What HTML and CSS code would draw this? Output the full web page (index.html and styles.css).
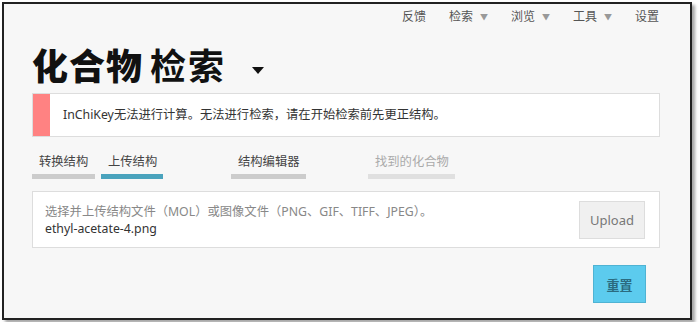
FILE: index.html
```html
<!DOCTYPE html>
<html lang="zh">
<head>
  <meta charset="UTF-8">
  <title>化合物检索</title>
  <link rel="stylesheet" href="styles.css">
</head>
<body>
  <div class="frame">
    <nav class="topnav">
      <a>反馈</a>
      <a>检索<span class="caret">▼</span></a>
      <a>浏览<span class="caret">▼</span></a>
      <a>工具<span class="caret">▼</span></a>
      <a>设置</a>
    </nav>

    <h1 class="title"><b>化合物</b><span class="light">检索</span><span class="title-caret"></span></h1>

    <div class="alert">
      <div class="alert-bar"></div>
      <div class="alert-text">InChiKey无法进行计算。无法进行检索，请在开始检索前先更正结构。</div>
    </div>

    <div class="tabs">
      <div class="tab t1">转换结构</div>
      <div class="tab t2 active">上传结构</div>
      <div class="tab t3">结构编辑器</div>
      <div class="tab t4 disabled">找到的化合物</div>
    </div>

    <div class="upload">
      <div class="upload-info">
        <div class="hint">选择并上传结构文件（MOL）或图像文件（PNG、GIF、TIFF、JPEG）。</div>
        <div class="filename">ethyl-acetate-4.png</div>
      </div>
      <button class="btn-upload">Upload</button>
    </div>

    <div class="actions">
      <button class="btn-reset">重置</button>
    </div>
  </div>
</body>
</html>
```

FILE: styles.css
```css
body {
  margin: 0;
  background: #fff;
  font-family: "Noto Sans", "Noto Sans CJK SC", sans-serif;
  color: #333;
}
.frame {
  box-sizing: border-box;
  width: 690px;
  height: 318px;
  margin: 2px;
  border: 2px solid #222;
  background: #f7f7f7;
  box-shadow: 3px 3px 3px rgba(0, 0, 0, 0.35);
  padding: 0 30px 0 28px;
}
.topnav {
  display: flex;
  justify-content: flex-end;
  gap: 23px;
  font-size: 12px;
  color: #555;
  padding-top: 2px;
  padding-right: 1px;
  height: 22px;
  line-height: 22px;
}
.caret {
  font-size: 8px;
  color: #999;
  margin-left: 7px;
  vertical-align: 1px;
}
.title {
  margin: 14px 0 0 0;
  font-size: 36px;
  font-weight: 700;
  color: #111;
  line-height: 50px;
  height: 51px;
  white-space: nowrap;
}
.title b {
  font-weight: 900;
  letter-spacing: 1px;
}
.title .light {
  margin-left: 7px;
  letter-spacing: 2px;
}
.title-caret {
  display: inline-block;
  width: 0;
  height: 0;
  border-left: 6px solid transparent;
  border-right: 6px solid transparent;
  border-top: 7px solid #111;
  margin-left: 26px;
  vertical-align: 6px;
}
.alert {
  display: flex;
  height: 44px;
  box-sizing: border-box;
  background: #fff;
  border: 1px solid #ddd;
}
.alert-bar {
  width: 17px;
  background: #ff8282;
}
.alert-text {
  padding-left: 13px;
  font-size: 12.3px;
  line-height: 42px;
  color: #333;
}
.tabs {
  display: flex;
  margin-top: 14px;
  height: 40px;
  font-size: 12.3px;
}
.tab {
  box-sizing: border-box;
  height: 28px;
  padding: 0 7px;
  line-height: 22px;
  border-bottom: 5px solid #ccc;
  color: #444;
  white-space: nowrap;
}
.t1 { width: 63px; }
.t2 { width: 62px; margin-left: 6px; }
.t3 { width: 75px; margin-left: 68px; }
.t4 { width: 87px; margin-left: 62px; }
.tab.active {
  border-bottom-color: #4aa3bd;
}
.tab.disabled {
  color: #aaa;
  border-bottom-color: #e0e0e0;
}
.upload {
  display: flex;
  align-items: center;
  justify-content: space-between;
  box-sizing: border-box;
  height: 57px;
  background: #fff;
  border: 1px solid #ddd;
  padding: 0 14px 0 12px;
}
.hint,
.filename {
  font-size: 12.3px;
  height: 17px;
  line-height: 17px;
  white-space: nowrap;
}
.hint {
  color: #888;
}
.filename {
  color: #333;
}
.btn-upload {
  width: 66px;
  height: 38px;
  background: #f0f0f0;
  border: 1px solid #ddd;
  color: #777;
  font-family: inherit;
  font-size: 13px;
}
.actions {
  display: flex;
  justify-content: flex-end;
  padding: 17px 14px 0 0;
}
.btn-reset {
  width: 53px;
  height: 38px;
  background: #5ccbee;
  border: 1px solid #4fb3d3;
  color: #2b6b80;
  font-family: inherit;
  font-size: 13px;
  font-weight: 700;
}
```
